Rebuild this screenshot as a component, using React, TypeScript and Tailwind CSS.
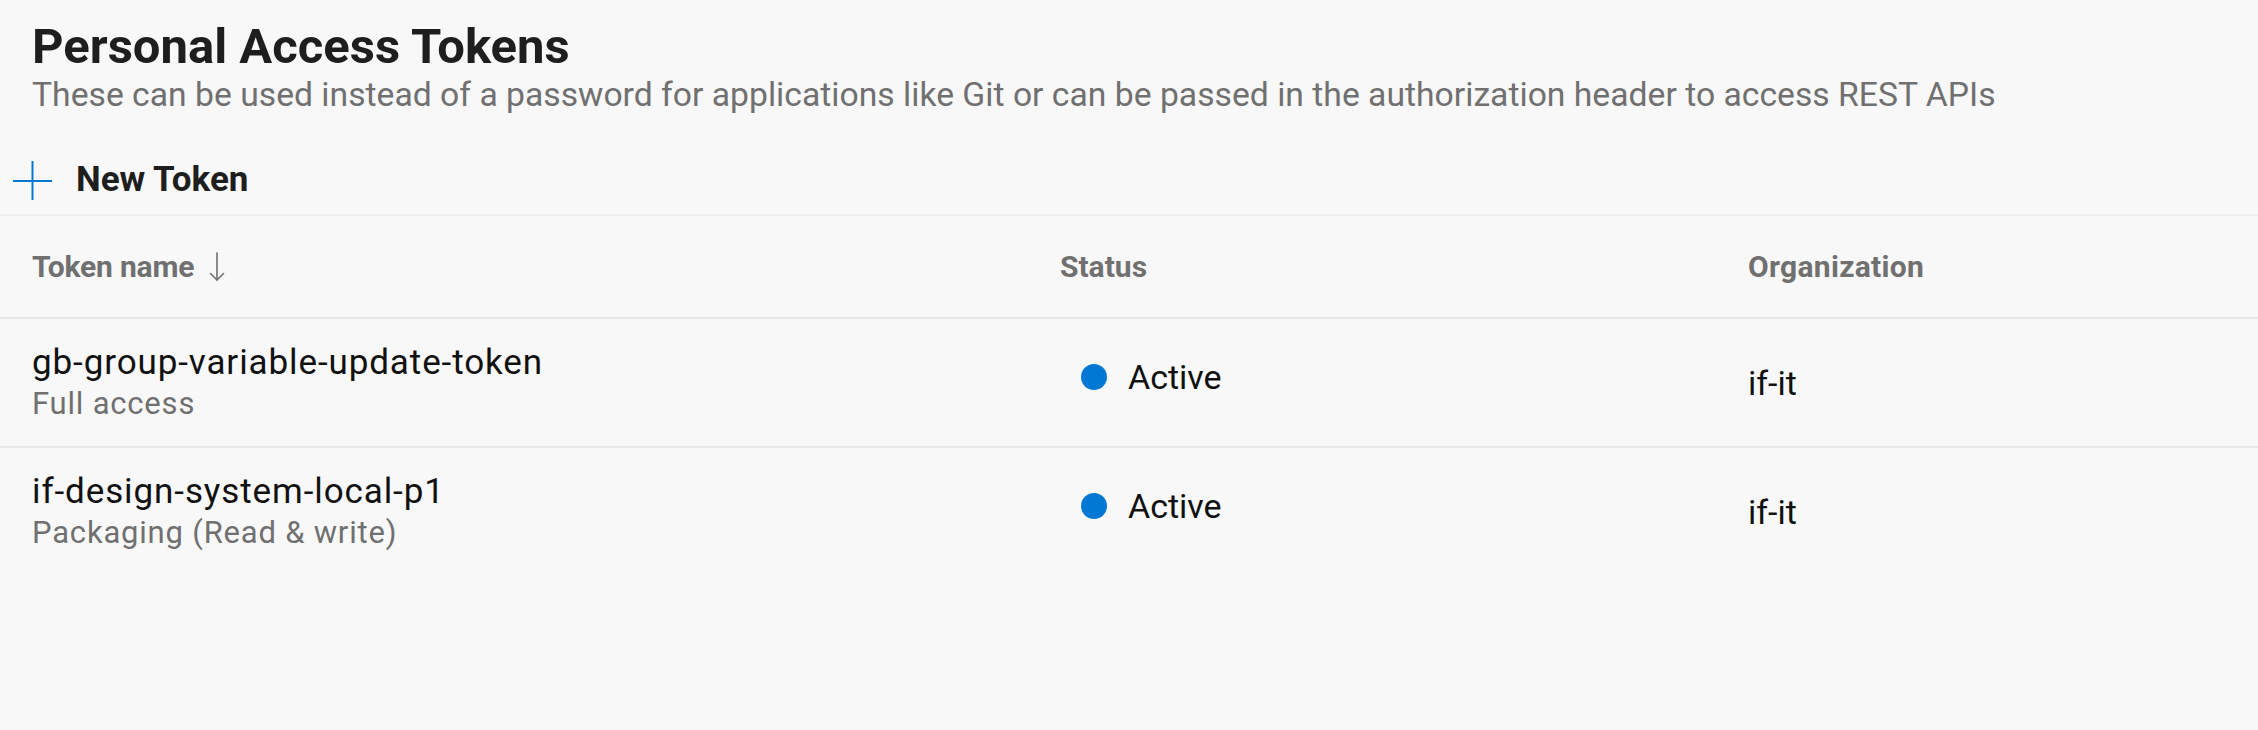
import React from 'react';

type Token = {
  name: string;
  scope: string;
  status: string;
  org: string;
};

const tokens: Token[] = [
  { name: 'gb-group-variable-update-token', scope: 'Full access', status: 'Active', org: 'if-it' },
  { name: 'if-design-system-local-p1', scope: 'Packaging (Read & write)', status: 'Active', org: 'if-it' },
];

const PlusIcon = () => (
  <svg width="39" height="39" viewBox="0 0 39 39" fill="none" stroke="#0078d4" strokeWidth="2">
    <line x1="0" y1="20" x2="39" y2="20" />
    <line x1="19.5" y1="0" x2="19.5" y2="39" />
  </svg>
);

const SortDownIcon = () => (
  <svg width="16" height="30" viewBox="0 0 16 30" fill="none" stroke="#707070" strokeWidth="1.6" strokeLinecap="round" strokeLinejoin="round">
    <line x1="8" y1="1" x2="8" y2="28" />
    <polyline points="1.5,21.5 8,28 14.5,21.5" />
  </svg>
);

export default function App() {
  return (
    <div className="min-h-screen w-full bg-[#f8f8f8] font-['Roboto',sans-serif]">
      <div className="pl-[32px] pt-[19px]">
        <h1 className="text-[49px] leading-[56px] font-bold text-[#1e1e1e]">Personal Access Tokens</h1>
        <p className="text-[33.7px] leading-[40px] text-[#707070]">
          These can be used instead of a password for applications like Git or can be passed in the authorization header to access REST APIs
        </p>
      </div>

      <div className="mt-[31px] flex h-[68px] items-center gap-[24px] border-b-2 border-[#efefef] pl-[13px] box-content">
        <PlusIcon />
        <span className="text-[35px] font-bold text-[#1e1e1e]">New Token</span>
      </div>

      <div className="grid h-[101px] grid-cols-[1028px_688px_1fr] items-center border-b-2 border-[#e9e9e9] pl-[32px] box-content text-[30px] font-bold text-[#707070]">
        <div className="flex items-center gap-[15px]">
          <span className="tracking-[-0.2px]">Token name</span>
          <SortDownIcon />
        </div>
        <div>Status</div>
        <div className="tracking-[0.3px]">Organization</div>
      </div>

      {tokens.map((t, i) => (
        <div
          key={t.name}
          className={
            'grid h-[127px] grid-cols-[1028px_688px_1fr] items-center pl-[32px] box-content ' +
            (i < tokens.length - 1 ? 'border-b-2 border-[#e9e9e9]' : '')
          }
        >
          <div className="flex flex-col">
            <span className="text-[35px] leading-[41px] tracking-[0.9px] text-[#111111]">{t.name}</span>
            <span className="text-[31px] leading-[41px] tracking-[0.8px] text-[#707070]">{t.scope}</span>
          </div>
          <div className="flex items-center gap-[21px] pb-[12px] pl-[21px]">
            <span className="h-[26px] w-[26px] rounded-full bg-[#0078d4]" />
            <span className="text-[34px] leading-[40px] text-[#111111]">{t.status}</span>
          </div>
          <div className="text-[34px] leading-[40px] text-[#111111]">{t.org}</div>
        </div>
      ))}
    </div>
  );
}
